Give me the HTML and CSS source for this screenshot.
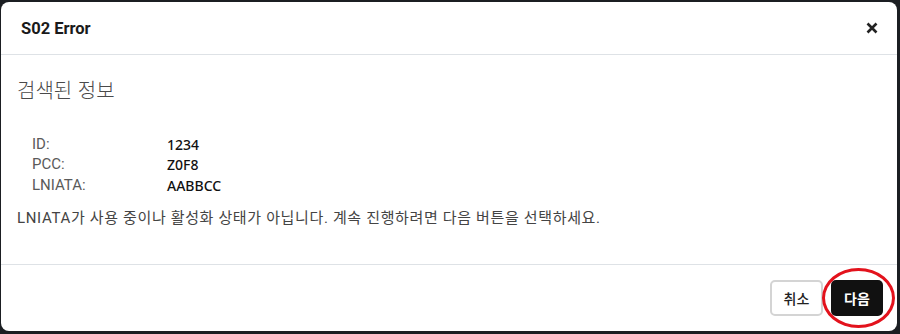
FILE: index.html
```html
<!DOCTYPE html>
<html lang="ko">
<head>
<meta charset="utf-8">
<link rel="stylesheet" href="styles.css">
</head>
<body>
<div class="modal">
  <div class="modal-header">
    <h1 class="modal-title">S02 Error</h1>
    <button class="close" aria-label="닫기">
      <svg width="12" height="12" viewBox="0 0 12 12"><path d="M1.5 1.5 L10.5 10.5 M10.5 1.5 L1.5 10.5" stroke="#222" stroke-width="2.6" stroke-linecap="butt"/></svg>
    </button>
  </div>
  <div class="modal-body">
    <h2 class="section-title">검색된 정보</h2>
    <dl class="info">
      <dt>ID:</dt><dd>1234</dd>
      <dt>PCC:</dt><dd>Z0F8</dd>
      <dt>LNIATA:</dt><dd>AABBCC</dd>
    </dl>
    <p class="message">LNIATA가 사용 중이나 활성화 상태가 아닙니다. 계속 진행하려면 다음 버튼을 선택하세요.</p>
  </div>
  <div class="modal-footer">
    <button class="btn btn-cancel">취소</button>
    <button class="btn btn-next">다음</button>
  </div>
</div>
</body>
</html>
```
FILE: styles.css
```css
html, body {
  margin: 0;
  padding: 0;
}
body {
  background: #1b1e22;
  width: 900px;
  height: 334px;
  overflow: hidden;
  font-family: Roboto, "Noto Sans CJK KR", sans-serif;
}
.modal {
  margin: 2px 3px 3px 1px;
  height: 329px;
  background: #fff;
  border-radius: 8px;
  display: flex;
  flex-direction: column;
  box-sizing: border-box;
}
.modal-header {
  display: flex;
  align-items: center;
  justify-content: space-between;
  height: 52px;
  padding: 0 19px 0 20px;
  border-bottom: 1px solid #dee2e6;
  flex: none;
}
.modal-title {
  margin: 0;
  font-size: 16.5px;
  font-weight: 700;
  color: #1a1a1a;
}
.close {
  border: 0;
  background: none;
  padding: 0;
  width: 12px;
  height: 12px;
  display: flex;
  cursor: pointer;
}
.modal-body {
  flex: 1;
  padding: 20px 16px 0 16px;
}
.section-title {
  margin: 0;
  font-size: 20px;
  line-height: 30px;
  font-weight: 300;
  color: #4a4a4a;
  font-family: "Noto Sans CJK KR", sans-serif;
}
.info {
  margin: 29px 0 0 15px;
  display: grid;
  grid-template-columns: 135px auto;
  grid-template-rows: 20px 20px 22px;
  align-items: center;
}
.info dt {
  font-size: 15px;
  color: #5a5a5a;
  font-weight: 400;
}
.info dd {
  margin: 0;
  font-family: "Noto Sans", sans-serif;
  font-size: 14px;
  font-weight: 500;
  color: #111;
}
.message {
  margin: 11px 0 0;
  font-size: 15px;
  line-height: 22px;
  letter-spacing: 0.65px;
  color: #444;
}
.modal-footer {
  flex: none;
  display: flex;
  justify-content: flex-end;
  align-items: center;
  gap: 8px;
  height: 67px;
  padding: 0 14px 0 16px;
  border-top: 1px solid #dee2e6;
  box-sizing: border-box;
}
.btn {
  height: 36px;
  border-radius: 5px;
  font-family: "Noto Sans CJK KR", sans-serif;
  font-size: 14px;
  font-weight: 500;
  padding: 0;
  white-space: nowrap;
  cursor: pointer;
}
.btn-cancel {
  width: 53px;
  background: #fff;
  color: #222;
  border: 2px solid #d4d4d4;
}
.btn-next {
  width: 52px;
  background: #111;
  color: #fff;
  border: 0;
  font-weight: 700;
  position: relative;
}
.btn-next::after {
  content: "";
  position: absolute;
  left: -9px;
  right: -12px;
  top: -12px;
  bottom: -12px;
  border: 3px solid #e3121c;
  border-radius: 50%;
  pointer-events: none;
}
```
